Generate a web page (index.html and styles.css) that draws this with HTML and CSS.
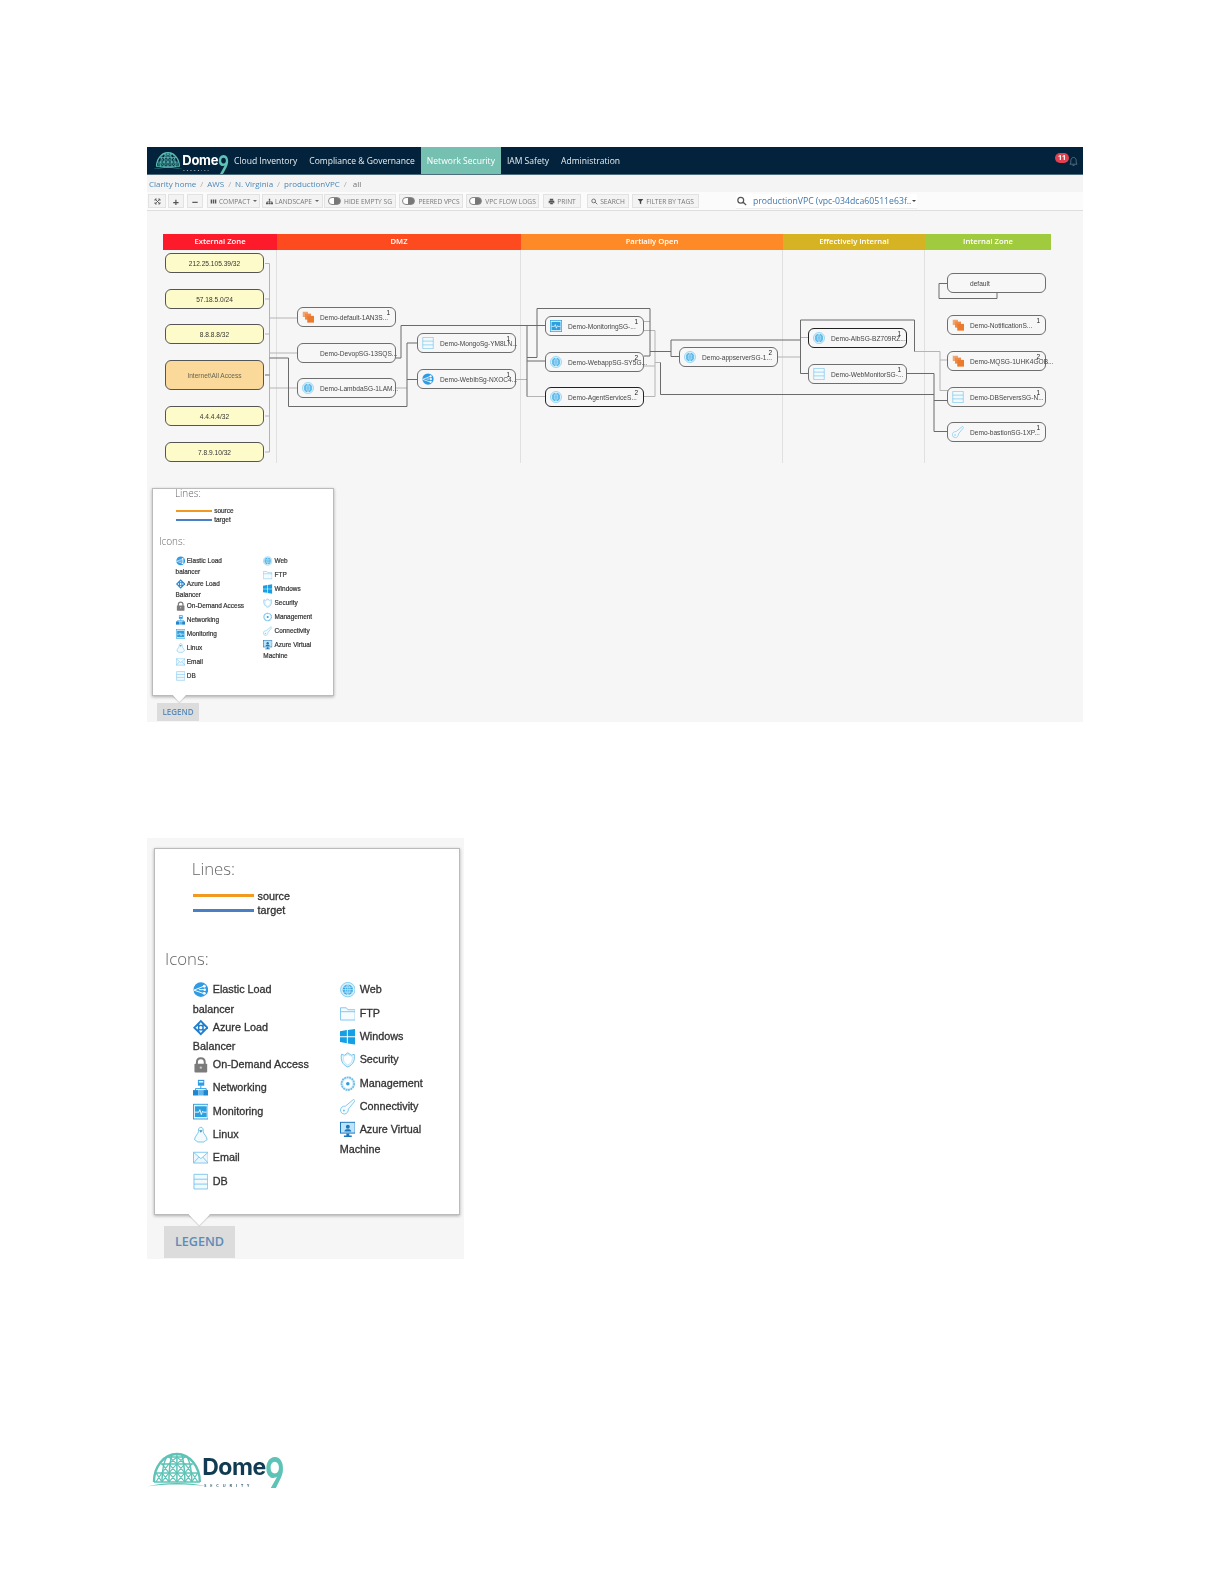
FILE: index.html
```html
<!DOCTYPE html>
<html>
<head>
    <meta charset="utf-8">
    <title>Dome9 Clarity</title>
    <link rel="stylesheet" href="styles.css">
</head>
<body>
    <svg class="defs" width="0" height="0">
        <defs>
            <symbol id="i-dome" viewBox="0 0 60 36">
                <g fill="none" stroke="#5dc3b6">
                    <path stroke-width="2.4" d="M7 31C7 16 17 3 30 3S53 16 53 31"/>
                    <path stroke-width="1.5" d="M7 31H53M9 22H51M14 13H46M21 6H39M30 3V31M20 5C16 13 15 22 15 31M40 5C44 13 45 22 45 31M25 3.500C23 12 22 22 22 31M35 3.500C37 12 38 22 38 31"/>
                    <path stroke-width="1.100" d="M15 13L22 22M22 13L15 22M22 13L30 22M30 13L22 22M30 13L38 22M38 13L30 22M38 13L45 22M45 13L38 22M9 22L15 31M15 22L9 31M15 22L22 31M22 22L15 31M22 22L30 31M30 22L22 31M30 22L38 31M38 22L30 31M38 22L45 31M45 22L38 31M45 22L51 31M51 22L45 31M22 6L30 13M30 6L22 13M30 6L38 13M38 6L30 13"/>
                </g>
                <path fill="#5dc3b6" d="M0 35.500C18 31 42 31 60 35.500C42 33 18 33 0 35.500Z"/>
            </symbol>
            <symbol id="i-stack" viewBox="0 0 16 16">
                <rect x="1" y="1" width="7" height="7" fill="#f2a46e"/>
                <rect x="4" y="3.500" width="8" height="8" fill="#ee8a45"/>
                <rect x="7" y="6.500" width="9" height="9" fill="#ec7a2d"/>
            </symbol>
            <symbol id="i-web" viewBox="0 0 16 16">
                <circle cx="8" cy="8" r="7.400" fill="#d7effb" stroke="#7ccbf0" stroke-width=".9"/>
                <circle cx="8" cy="8" r="5.300" fill="#33a6e3"/>
                <path fill="none" stroke="#d7effb" stroke-width=".7" d="M2.700 8H13.300M3.500 5.500H12.500M3.500 10.500H12.500M8 2.700V13.300M8 2.700C5 5.500 5 10.500 8 13.300M8 2.700C11 5.500 11 10.500 8 13.300"/>
            </symbol>
            <symbol id="i-db" viewBox="0 0 16 16">
                <path fill="#f2fafe" stroke="#74c3ea" stroke-width=".9" d="M1 .500H15V15.500H1ZM1 5.500H15M1 10.500H15"/>
            </symbol>
            <symbol id="i-elb" viewBox="0 0 16 16">
                <circle cx="8" cy="8" r="7.500" fill="#2f9be3"/>
                <path fill="none" stroke="#fff" stroke-width="1" d="M1 8.500L11 4.500M1 8.500L11 12M6 8H12"/>
                <circle cx="11.500" cy="4.500" r="1.500" fill="#fff"/>
                <circle cx="12" cy="8" r="1.300" fill="#fff"/>
                <circle cx="11.500" cy="11.800" r="1.500" fill="#fff"/>
            </symbol>
            <symbol id="i-azure-lb" viewBox="0 0 16 16">
                <path fill="#1f7fce" d="M8 0L16 8L8 16L0 8Z"/>
                <path fill="#fff" d="M8 2.500L10 5H6ZM8 13.500L6 11H10ZM2.500 8L5 6V10ZM13.500 8L11 10V6Z"/>
                <circle cx="8" cy="8" r="1.600" fill="#fff"/>
            </symbol>
            <symbol id="i-lock" viewBox="0 0 16 16">
                <path fill="none" stroke="#7b7b7b" stroke-width="2" d="M4 8V5.500C4 3 5.800 1.500 8 1.500S12 3 12 5.500V8"/>
                <rect x="1.500" y="7" width="13" height="9" rx=".8" fill="#7b7b7b"/>
                <circle cx="8" cy="11" r="1.200" fill="#c9c9c9"/>
            </symbol>
            <symbol id="i-network" viewBox="0 0 16 16">
                <rect x="5" y="0" width="6.500" height="6" fill="#2f9be3"/>
                <rect x="6" y="1.200" width="4.500" height="1.600" fill="#dff2fc"/>
                <path fill="none" stroke="#2f9be3" d="M8 6V9M2.500 11V9H13.500V11"/>
                <rect x="0" y="10.500" width="5.500" height="5.500" fill="#1f86d0"/>
                <rect x="5.500" y="10.500" width="5" height="5.500" fill="#5fb6ec"/>
                <rect x="10.500" y="10.500" width="5.500" height="5.500" fill="#1f86d0"/>
            </symbol>
            <symbol id="i-monitor" viewBox="0 0 16 16">
                <rect x=".5" y=".5" width="15" height="15" fill="#e4f4fc" stroke="#31a3e1"/>
                <rect x="2" y="2.500" width="12" height="11" fill="#2c9fdf"/>
                <path fill="none" stroke="#fff" stroke-width=".9" d="M2 8.500H6L7 6L8.500 11L9.800 7.500L10.500 8.500H14"/>
            </symbol>
            <symbol id="i-linux" viewBox="0 0 16 16">
                <path fill="#f3fafe" stroke="#6fbfe8" stroke-width=".9" d="M8 .500C5.800 .500 5.500 2.500 5.500 5C5.500 7 2 9.500 1.500 13C3 13.500 3.500 15 5 15.500H11C12.500 15 13 13.500 14.500 13C14 9.500 10.500 7 10.500 5C10.500 2.500 10.200 .500 8 .500Z"/>
                <path fill="#3d8fbf" d="M6.200 3.500H9.800L8 6Z"/>
            </symbol>
            <symbol id="i-email" viewBox="0 0 16 16">
                <path fill="#ecf7fd" stroke="#74c3ea" stroke-width=".9" d="M.500 2.500H15.500V13.500H.500ZM.500 2.500L8 9L15.500 2.500M.500 13.500L6 7.500M15.500 13.500L10 7.500"/>
            </symbol>
            <symbol id="i-ftp" viewBox="0 0 16 16">
                <path fill="#f5fbfe" stroke="#74c3ea" stroke-width=".9" d="M.500 2H6.500L8 4H15.500V14.500H.500ZM.500 6H15.500"/>
            </symbol>
            <symbol id="i-windows" viewBox="0 0 16 16">
                <path fill="#15a0e6" d="M0 2.500L7 1.300V7.500H0ZM8 1.100L16 0V7.500H8ZM0 8.500H7V14.700L0 13.500ZM8 8.500H16V16L8 14.900Z"/>
            </symbol>
            <symbol id="i-shield" viewBox="0 0 16 16">
                <path fill="#e6f5fc" stroke="#74c3ea" d="M1.500 2.500L4.500 3.500L8 1L11.500 3.500L14.500 2.500C15.500 8 14 13 8 15.500C2 13 .500 8 1.500 2.500Z"/>
                <path fill="#fff" stroke="#a9dcf4" stroke-width=".6" d="M3.500 4.800L8 2.800L12.500 4.800C13 9 11.500 12 8 13.500C4.500 12 3 9 3.500 4.800Z"/>
            </symbol>
            <symbol id="i-gear" viewBox="0 0 16 16">
                <circle cx="8" cy="8" r="6.500" fill="#d9f0fb" stroke="#6fbfe8" stroke-width="1.800" stroke-dasharray="2 .6"/>
                <circle cx="8" cy="8" r="4.500" fill="#fff"/>
                <circle cx="8" cy="8" r="1.800" fill="#2f9be3"/>
            </symbol>
            <symbol id="i-key" viewBox="0 0 16 16">
                <path fill="#f5fbfe" stroke="#74c3ea" stroke-width=".9" d="M14 .500L15.500 2L8.500 10.500C8.800 13 7 15.500 4.500 15.500C2 15.500 .500 13.700 .500 11.500C.500 9 3 7 5.500 7.500Z"/>
                <circle cx="4" cy="12" r="1" fill="#74c3ea"/>
            </symbol>
            <symbol id="i-vm" viewBox="0 0 16 16">
                <rect x=".5" y=".5" width="15" height="11" fill="#bfe4f8" stroke="#1a75bd"/>
                <circle cx="8" cy="5" r="2" fill="#1a75bd"/>
                <path fill="#1a75bd" d="M4.500 10C4.500 8 6 7.500 8 7.500S11.500 8 11.500 10ZM6.500 12H9.500V14H12V15.500H4V14H6.500Z"/>
            </symbol>
        </defs>
    </svg>

    <div class="app">
        <div class="navbar">
            <div class="logo logo-nav">
                <svg class="logo-dome"><use href="#i-dome"/></svg>
                <div class="logo-word">Dome<span class="logo-nine">9</span><span class="logo-sub">SECURITY</span></div>
            </div>
            <a class="nav-item">Cloud Inventory</a>
            <a class="nav-item">Compliance &amp; Governance</a>
            <a class="nav-item nav-active">Network Security</a>
            <a class="nav-item">IAM Safety</a>
            <a class="nav-item">Administration</a>
            <div class="nav-alerts">
                <span class="badge">11</span>
                <svg class="bell" viewBox="0 0 10 12"><path fill="none" stroke="#6f8798" stroke-width=".8" d="M1 9C2 8 2 7 2 5C2 3 3.500 1.500 5 1.500S8 3 8 5C8 7 8 8 9 9ZM4 10.500H6"/></svg>
            </div>
        </div>

        <div class="breadcrumb">
            <a>Clarity home</a><i>/</i><a>AWS</a><i>/</i><a>N. Virginia</a><i>/</i><a>productionVPC</a><i>/</i><b>all</b>
        </div>

        <div class="toolbar">
            <span class="tool tool-icon">
                <svg viewBox="0 0 10 10"><path fill="none" stroke="#444" stroke-width="1.100" d="M2 2L8 8M8 2L2 8M1.500 4V1.500H4M6 1.500H8.500V4M8.500 6V8.500H6M4 8.500H1.500V6"/></svg>
            </span>
            <span class="tool tool-sign">+</span>
            <span class="tool tool-sign">&minus;</span>
            <span class="tool tool-compact">
                <svg viewBox="0 0 10 10"><path fill="#555" d="M1 2H3V8H1ZM4 2H6V8H4ZM7 2H9V8H7Z"/></svg>COMPACT<u></u>
            </span>
            <span class="tool tool-landscape">
                <svg viewBox="0 0 10 10"><path fill="#555" d="M4 1H6V3.500H4ZM4.600 3.500H5.400V5H9V6.500H8V5.700H5.400V6.500H4.600V5.700H2V6.500H1V5H4.600ZM0 6.500H3V9H0ZM3.500 6.500H6.500V9H3.500ZM7 6.500H10V9H7Z"/></svg>LANDSCAPE<u></u>
            </span>
            <span class="tool tool-hide"><em></em>HIDE EMPTY SG</span>
            <span class="tool tool-peered"><em></em>PEERED VPCS</span>
            <span class="tool tool-flow"><em></em>VPC FLOW LOGS</span>
            <span class="tool tool-print">
                <svg viewBox="0 0 10 10"><path fill="#555" d="M2.500 1H7.500V3.500H2.500ZM1 4H9V7.500H7.500V6H2.500V7.500H1ZM3 6.500H7V9H3Z"/></svg>PRINT
            </span>
            <span class="tool tool-search">
                <svg viewBox="0 0 10 10"><path fill="none" stroke="#555" stroke-width="1.100" d="M6.500 4.200A2.700 2.700 0 1 1 1.100 4.200A2.700 2.700 0 1 1 6.500 4.200ZM6 6L9 9"/></svg>SEARCH
            </span>
            <span class="tool tool-filter">
                <svg viewBox="0 0 10 10"><path fill="#444" d="M1 1.500H9L6 5V9L4 8V5Z"/></svg>FILTER BY TAGS
            </span>
            <div class="vpc-picker">
                <svg viewBox="0 0 12 12"><path fill="none" stroke="#555" stroke-width="1.500" d="M8 5A3.500 3.500 0 1 1 1 5A3.500 3.500 0 1 1 8 5ZM7.500 7.500L11 11"/></svg>
                <span class="vpc-name">productionVPC (vpc-034dca60511e63f..</span>
                <u></u>
            </div>
        </div>

        <div class="diagram">
            <div class="zones">
                <div class="zone zone-external"><div class="zone-head">External Zone</div></div>
                <div class="zone zone-dmz"><div class="zone-head">DMZ</div></div>
                <div class="zone zone-partial"><div class="zone-head">Partially Open</div></div>
                <div class="zone zone-effective"><div class="zone-head">Effectively Internal</div></div>
                <div class="zone zone-internal"><div class="zone-head">Internal Zone</div></div>
            </div>

            <svg class="links" viewBox="0 0 936 511">
                <g transform="translate(-147 -211)" fill="none">
                    <path stroke="#b4b4b4" d="M265 263.500H269.500V452H265M265 299H269.500M265 334H269.500M265 416H269.500M269.500 318H297M269.500 353H297M269.500 388H297M396 388H407M516 379.500H527M527 396.500H545M644 321.500H650M644 330.500H655V396.500H644M644 366H655M655 362.500H660.500M778 357H800.500M800.500 337.500H808M914.500 351.500H940V390.500H948M940 360H948"/>
                    <path stroke="#6b6b6b" d="M265 375H269.500M269.500 358H288.500V406.500H407V343H417M407 379.500H417M396 358H401V325.500H527V396.500M527 325.500H545M527 357.500H537V308.500H650V356H644M527 361H545M650 351.500H671M671 340V356.500H679M671 340H800.500M800.500 320V373.500H808M800.500 320H914.500V351.500M906 373.500H934V431.500H948M934 400.500H948M660.500 362.500V394.500H934M939 283.500H947M939 283.500V298.500H997V293"/>
                </g>
            </svg>

            <div class="node ip ip-1"><span class="node-text">212.25.105.39/32</span></div>
            <div class="node ip ip-2"><span class="node-text">57.18.5.0/24</span></div>
            <div class="node ip ip-3"><span class="node-text">8.8.8.8/32</span></div>
            <div class="node ip ip-all"><span class="node-text">Internet\All Access</span></div>
            <div class="node ip ip-4"><span class="node-text">4.4.4.4/32</span></div>
            <div class="node ip ip-5"><span class="node-text">7.8.9.10/32</span></div>

            <div class="node sg-default"><svg class="node-icon"><use href="#i-stack"/></svg><span class="node-text">Demo-default-1AN3S...</span><sup>1</sup></div>
            <div class="node sg-devop"><span class="node-icon"></span><span class="node-text">Demo-DevopSG-13SQS...</span></div>
            <div class="node sg-lambda"><svg class="node-icon"><use href="#i-web"/></svg><span class="node-text">Demo-LambdaSG-1LAM...</span></div>
            <div class="node sg-mongo"><svg class="node-icon"><use href="#i-db"/></svg><span class="node-text">Demo-MongoSg-YM8LN...</span><sup>1</sup></div>
            <div class="node sg-webib"><svg class="node-icon"><use href="#i-elb"/></svg><span class="node-text">Demo-WebIbSg-NXOC4...</span><sup>1</sup></div>
            <div class="node sg-monitoring"><svg class="node-icon"><use href="#i-monitor"/></svg><span class="node-text">Demo-MonitoringSG-...</span><sup>1</sup></div>
            <div class="node sg-webapp"><svg class="node-icon"><use href="#i-web"/></svg><span class="node-text">Demo-WebappSG-SY5G...</span><sup>2</sup></div>
            <div class="node dark sg-agent"><svg class="node-icon"><use href="#i-web"/></svg><span class="node-text">Demo-AgentServiceS...</span><sup>2</sup></div>
            <div class="node sg-appserver"><svg class="node-icon"><use href="#i-web"/></svg><span class="node-text">Demo-appserverSG-1...</span><sup>2</sup></div>
            <div class="node dark sg-alb"><svg class="node-icon"><use href="#i-web"/></svg><span class="node-text">Demo-AlbSG-BZ709RZ...</span><sup>1</sup></div>
            <div class="node sg-webmon"><svg class="node-icon"><use href="#i-db"/></svg><span class="node-text">Demo-WebMonitorSG-...</span><sup>1</sup></div>
            <div class="node sg-plain"><span class="node-icon"></span><span class="node-text">default</span></div>
            <div class="node sg-notif"><svg class="node-icon"><use href="#i-stack"/></svg><span class="node-text">Demo-NotificationS...</span><sup>1</sup></div>
            <div class="node sg-mq"><svg class="node-icon"><use href="#i-stack"/></svg><span class="node-text">Demo-MQSG-1UHK4GOB...</span><sup>2</sup></div>
            <div class="node sg-dbservers"><svg class="node-icon"><use href="#i-db"/></svg><span class="node-text">Demo-DBServersSG-N...</span><sup>1</sup></div>
            <div class="node sg-bastion"><svg class="node-icon"><use href="#i-key"/></svg><span class="node-text">Demo-bastionSG-1XP...</span><sup>1</sup></div>

            <div class="legend legend-small">
                <div class="legend-panel">
                    <div class="legend-title legend-lines">Lines:</div>
                    <div class="line-row"><span class="line line-source"></span>source</div>
                    <div class="line-row"><span class="line line-target"></span>target</div>
                    <div class="legend-title legend-icons">Icons:</div>
                    <div class="legend-cols">
                        <div class="legend-col-a">
                            <div class="item"><svg><use href="#i-elb"/></svg>Elastic Load balancer</div>
                            <div class="item"><svg><use href="#i-azure-lb"/></svg>Azure Load Balancer</div>
                            <div class="item"><svg><use href="#i-lock"/></svg>On-Demand Access</div>
                            <div class="item"><svg><use href="#i-network"/></svg>Networking</div>
                            <div class="item"><svg><use href="#i-monitor"/></svg>Monitoring</div>
                            <div class="item"><svg><use href="#i-linux"/></svg>Linux</div>
                            <div class="item"><svg><use href="#i-email"/></svg>Email</div>
                            <div class="item"><svg><use href="#i-db"/></svg>DB</div>
                        </div>
                        <div class="legend-col-b">
                            <div class="item"><svg><use href="#i-web"/></svg>Web</div>
                            <div class="item"><svg><use href="#i-ftp"/></svg>FTP</div>
                            <div class="item"><svg><use href="#i-windows"/></svg>Windows</div>
                            <div class="item"><svg><use href="#i-shield"/></svg>Security</div>
                            <div class="item"><svg><use href="#i-gear"/></svg>Management</div>
                            <div class="item"><svg><use href="#i-key"/></svg>Connectivity</div>
                            <div class="item"><svg><use href="#i-vm"/></svg>Azure Virtual Machine</div>
                        </div>
                    </div>
                    <span class="legend-arrow"></span>
                </div>
                <div class="legend-tab">LEGEND</div>
            </div>
        </div>
    </div>

    <div class="legend legend-big">
        <div class="legend-panel">
            <div class="legend-title legend-lines">Lines:</div>
            <div class="line-row"><span class="line line-source"></span>source</div>
            <div class="line-row"><span class="line line-target"></span>target</div>
            <div class="legend-title legend-icons">Icons:</div>
            <div class="legend-cols">
                <div class="legend-col-a">
                    <div class="item"><svg><use href="#i-elb"/></svg>Elastic Load balancer</div>
                    <div class="item"><svg><use href="#i-azure-lb"/></svg>Azure Load Balancer</div>
                    <div class="item"><svg><use href="#i-lock"/></svg>On-Demand Access</div>
                    <div class="item"><svg><use href="#i-network"/></svg>Networking</div>
                    <div class="item"><svg><use href="#i-monitor"/></svg>Monitoring</div>
                    <div class="item"><svg><use href="#i-linux"/></svg>Linux</div>
                    <div class="item"><svg><use href="#i-email"/></svg>Email</div>
                    <div class="item"><svg><use href="#i-db"/></svg>DB</div>
                </div>
                <div class="legend-col-b">
                    <div class="item"><svg><use href="#i-web"/></svg>Web</div>
                    <div class="item"><svg><use href="#i-ftp"/></svg>FTP</div>
                    <div class="item"><svg><use href="#i-windows"/></svg>Windows</div>
                    <div class="item"><svg><use href="#i-shield"/></svg>Security</div>
                    <div class="item"><svg><use href="#i-gear"/></svg>Management</div>
                    <div class="item"><svg><use href="#i-key"/></svg>Connectivity</div>
                    <div class="item"><svg><use href="#i-vm"/></svg>Azure Virtual Machine</div>
                </div>
            </div>
            <span class="legend-arrow"></span>
        </div>
        <div class="legend-tab">LEGEND</div>
    </div>

    <div class="logo logo-footer">
        <svg class="logo-dome"><use href="#i-dome"/></svg>
        <div class="logo-word">Dome<span class="logo-nine">9</span><span class="logo-sub">SECURITY</span></div>
    </div>
</body>
</html>
```

FILE: styles.css
```css
body
{
    margin: 0;
    padding: 147px 0 0 147px;
    background: #fff;
    font-family: "Open Sans", sans-serif;
}
.defs
{
    display: block;
    height: 0;
}

/* logo, sized from its font-size */
.logo
{
    display: flex;
    align-items: flex-start;
    font-size: 23px;
}
.logo-dome
{
    flex: none;
    width: 2.6em;
    height: 1.56em;
}
.logo-word
{
    position: relative;
    margin-left: -0.2em;
    padding-top: 0.15em;
    font-family: Inter, sans-serif;
    font-weight: 700;
    line-height: 1.2em;
    letter-spacing: -0.02em;
    color: #113b52;
    white-space: nowrap;
}
.logo-nine
{
    display: inline-block;
    margin-left: -0.02em;
    font-family: Lato, sans-serif;
    font-weight: 700;
    font-size: 2.05em;
    line-height: 0.6em;
    color: #5dc3b6;
    transform: scaleX(0.72);
    transform-origin: left center;
    vertical-align: -0.35em;
}
.logo-sub
{
    position: absolute;
    left: 0.5em;
    top: 8.4em;
    font-family: "Open Sans", sans-serif;
    font-size: 0.17em;
    font-weight: 600;
    line-height: 1;
    letter-spacing: 1em;
}
.logo-nav
{
    flex: none;
    width: 75px;
    margin: 4px 0 0 6px;
    font-size: 13px;
}
.logo-nav .logo-dome
{
    width: 2.3em;
    height: 1.4em;
}
.logo-nav .logo-word
{
    margin-left: -0.05em;
    color: #fff;
}
.logo-footer
{
    margin: 192px 0 0 0;
    filter: blur(0.3px);
}

/* app screenshot */
.app
{
    width: 936px;
    height: 575px;
    background: #f6f6f6;
    filter: blur(0.3px);
}
.navbar
{
    display: flex;
    height: 28px;
    background: #02233b;
    border-bottom: 1px solid #4d6c7c;
    box-sizing: border-box;
}
.nav-item
{
    padding: 0 6px;
    font-size: 8.55px;
    line-height: 28px;
    color: #e8eef1;
}
.nav-active
{
    background: #76c0b2;
    color: #fff;
}
.nav-alerts
{
    display: flex;
    align-items: center;
    margin-left: auto;
    padding-right: 5px;
}
.badge
{
    width: 14px;
    height: 10px;
    border-radius: 5px;
    background: #e2404f;
    color: #fff;
    font-size: 7px;
    font-weight: 700;
    line-height: 10px;
    text-align: center;
    margin-bottom: 5px;
}
.bell
{
    width: 9px;
    height: 11px;
    margin-top: 2px;
}
.breadcrumb
{
    height: 17px;
    padding-left: 2px;
    background: #f4f4f4;
    font-size: 8px;
    line-height: 17px;
    color: #4a86b5;
}
.breadcrumb i
{
    margin: 0 4px;
    font-style: normal;
    color: #aaa;
}
.breadcrumb b
{
    margin-left: 2px;
    font-weight: 400;
    color: #777;
}
.toolbar
{
    display: flex;
    align-items: center;
    height: 19px;
    padding-left: 1px;
    box-sizing: border-box;
    background: #fbfbfb;
    border-bottom: 1px solid #ddd;
}
.tool
{
    display: flex;
    align-items: center;
    justify-content: center;
    box-sizing: border-box;
    height: 14px;
    margin-right: 3px;
    background: #f3f3f3;
    border: 1px solid #e2e2e2;
    font-size: 6.6px;
    color: #777;
    white-space: nowrap;
}
.tool svg
{
    width: 7px;
    height: 7px;
    margin-right: 2px;
}
.tool u
{
    width: 0;
    height: 0;
    margin-left: 3px;
    border: 2px solid transparent;
    border-top: 2.5px solid #666;
    border-bottom: 0;
}
.tool em
{
    width: 11px;
    height: 6px;
    margin-right: 3px;
    border: 1px solid #888;
    border-radius: 4px;
    background: linear-gradient(90deg, #fff 45%, #777 45%);
}
.tool-icon
{
    width: 18px;
    margin-right: 2px;
}
.tool-sign
{
    width: 16px;
    font-size: 11px;
    font-weight: 700;
    color: #555;
}
.tool-sign + .tool-sign
{
    margin-right: 4px;
}
.tool-icon svg
{
    margin: 0;
}
.tool-compact
{
    width: 53px;
    margin-right: 2px;
}
.tool-landscape
{
    width: 61px;
    margin-right: 1px;
}
.tool-hide
{
    width: 72px;
}
.tool-peered
{
    width: 64px;
}
.tool-flow
{
    width: 73px;
    margin-right: 4px;
}
.tool-print
{
    width: 38px;
    margin-right: 6px;
}
.tool-search
{
    width: 42px;
}
.tool-filter
{
    width: 67px;
    margin-right: 37px;
}
.vpc-picker
{
    display: flex;
    align-items: center;
    width: 181px;
    height: 14px;
    background: #fff;
    border-bottom: 1px solid #eee;
    font-size: 8.7px;
    color: #3f77ac;
    white-space: nowrap;
}
.vpc-picker svg
{
    flex: none;
    width: 10px;
    height: 10px;
    margin: 0 6px 0 1px;
}
.vpc-picker u
{
    margin-left: 1px;
    border: 2px solid transparent;
    border-top: 2.5px solid #444;
    border-bottom: 0;
}

/* diagram canvas: nodes and links sit at their own places */
.diagram
{
    position: relative;
    height: 511px;
    padding: 23px 0 0 16px;
    box-sizing: border-box;
}
.zones
{
    display: flex;
}
.zone
{
    box-sizing: border-box;
    height: 229px;
    border-right: 1px solid #e0e0e0;
}
.zone-head
{
    height: 16px;
    margin-right: -1px;
    color: #fff;
    font-size: 7.7px;
    font-weight: 600;
    line-height: 15px;
    text-align: center;
}
.zone-external
{
    width: 114px;
}
.zone-external .zone-head
{
    background: #fc1a2b;
}
.zone-dmz
{
    width: 244px;
}
.zone-dmz .zone-head
{
    background: #fd4b1f;
}
.zone-partial
{
    width: 262px;
}
.zone-partial .zone-head
{
    background: #fd8a26;
}
.zone-effective
{
    width: 142px;
}
.zone-effective .zone-head
{
    background: #d6b323;
}
.zone-internal
{
    width: 126px;
    border-right: 0;
}
.zone-internal .zone-head
{
    margin-right: 0;
    background: #a0cb3e;
}
.links
{
    position: absolute;
    left: 0;
    top: 0;
    width: 936px;
    height: 511px;
}
.node
{
    position: absolute;
    display: flex;
    align-items: center;
    box-sizing: border-box;
    width: 99px;
    height: 20px;
    padding-left: 4px;
    border: 1px solid #6e6e6e;
    border-radius: 6px;
    background: #f7f7f7;
    font-family: "Liberation Sans", sans-serif;
    font-size: 6.6px;
    color: #444;
    white-space: nowrap;
}
.node.dark
{
    border-color: #222;
}
.node-icon
{
    flex: none;
    width: 12px;
    height: 12px;
    margin-right: 6px;
}
.node sup
{
    position: absolute;
    top: 0;
    right: 5px;
    font-size: 6.5px;
    line-height: 9px;
    color: #222;
}
.ip
{
    justify-content: center;
    padding: 0;
    background: #fdfbc9;
    border-color: #555;
    color: #333;
}
.ip-1
{
    left: 18px;
    top: 42px;
}
.ip-2
{
    left: 18px;
    top: 78px;
}
.ip-3
{
    left: 18px;
    top: 113px;
}
.ip-all
{
    left: 18px;
    top: 149px;
    height: 30px;
    background: #fbd99b;
    color: #665;
}
.ip-4
{
    left: 18px;
    top: 195px;
}
.ip-5
{
    left: 18px;
    top: 231px;
}
.sg-default
{
    left: 150px;
    top: 96px;
}
.sg-devop
{
    left: 150px;
    top: 132px;
}
.sg-lambda
{
    left: 150px;
    top: 167px;
}
.sg-mongo
{
    left: 270px;
    top: 122px;
}
.sg-webib
{
    left: 270px;
    top: 158px;
}
.sg-monitoring
{
    left: 398px;
    top: 105px;
}
.sg-webapp
{
    left: 398px;
    top: 141px;
}
.sg-agent
{
    left: 398px;
    top: 176px;
}
.sg-appserver
{
    left: 532px;
    top: 136px;
}
.sg-alb
{
    left: 661px;
    top: 117px;
}
.sg-webmon
{
    left: 661px;
    top: 153px;
}
.sg-plain
{
    left: 800px;
    top: 62px;
}
.sg-notif
{
    left: 800px;
    top: 104px;
}
.sg-mq
{
    left: 800px;
    top: 140px;
}
.sg-dbservers
{
    left: 800px;
    top: 176px;
}
.sg-bastion
{
    left: 800px;
    top: 211px;
}

/* legend, every length in em so the two copies share one set of rules */
.legend
{
    font-family: "Liberation Sans", sans-serif;
    font-size: 10.8px;
    color: #333;
}
.legend-panel
{
    position: relative;
    box-sizing: border-box;
    width: 28.35em;
    height: 34em;
    padding-top: 0.97em;
    background: #fff;
    border: 1px solid #bbb;
    box-shadow: 0 1px 3px rgba(0, 0, 0, 0.3);
}
.legend-title
{
    font-family: "Open Sans", sans-serif;
    font-weight: 300;
    font-size: 1.55em;
    line-height: 1.2;
    color: #666;
}
.legend-lines
{
    margin: 0 0 0.55em 2.2em;
}
.legend-icons
{
    margin: 1.9em 0 0.55em 0.6em;
}
.line-row
{
    display: flex;
    align-items: center;
    margin-left: 3.5em;
    line-height: 1.32em;
    -webkit-text-stroke: 0.3px #333;
}
.line
{
    width: 5.7em;
    height: 0.28em;
    margin-right: 0.3em;
}
.line-source
{
    background: #f29a1f;
}
.line-target
{
    background: #4a7fc4;
}
.legend-cols
{
    display: flex;
    margin-left: 3.5em;
}
.legend-col-a
{
    width: 13.6em;
}
.legend-col-a .item
{
    width: 11em;
}
.legend-col-b
{
    width: 9.4em;
}
.item
{
    line-height: 1.3em;
    -webkit-text-stroke: 0.3px #333;
}
.item svg
{
    display: inline-block;
    width: 1.45em;
    height: 2.16em;
    margin-right: 0.4em;
    vertical-align: middle;
}
.legend-arrow
{
    position: absolute;
    left: 3.4em;
    bottom: -0.7em;
    width: 1.35em;
    height: 1.35em;
    background: #fff;
    transform: rotate(45deg);
    box-shadow: 1px 1px 1px rgba(0, 0, 0, 0.15);
}
.legend-tab
{
    width: 71px;
    height: 32px;
    margin: 11px 0 0 10px;
    background: #dcdcdc;
    font-family: "Open Sans", sans-serif;
    font-size: 12.6px;
    font-weight: 600;
    line-height: 32px;
    text-align: center;
    color: #5b8cb8;
}
.legend-big
{
    box-sizing: border-box;
    width: 317px;
    height: 421px;
    margin-top: 116px;
    padding: 10px 0 0 7px;
    background: #f6f6f6;
    filter: blur(0.3px);
}
.legend-small
{
    position: absolute;
    left: 5px;
    top: 277px;
    font-size: 6.45px;
}
.legend-small .legend-panel
{
    width: 182px;
    height: 208px;
    padding-top: 0;
}
.legend-small .legend-lines
{
    margin-top: -2px;
    margin-bottom: 0.8em;
}
.legend-small .legend-icons
{
    margin-top: 1.1em;
    margin-bottom: 0.75em;
}
.legend-small .item, .legend-small .line-row
{
    -webkit-text-stroke: 0.2px #333;
}
.legend-small .item svg
{
    margin-right: 0.3em;
}
.legend-small .legend-tab
{
    width: 42px;
    height: 18px;
    margin: 7px 0 0 5px;
    font-size: 8px;
    font-weight: 600;
    line-height: 18px;
}
```
